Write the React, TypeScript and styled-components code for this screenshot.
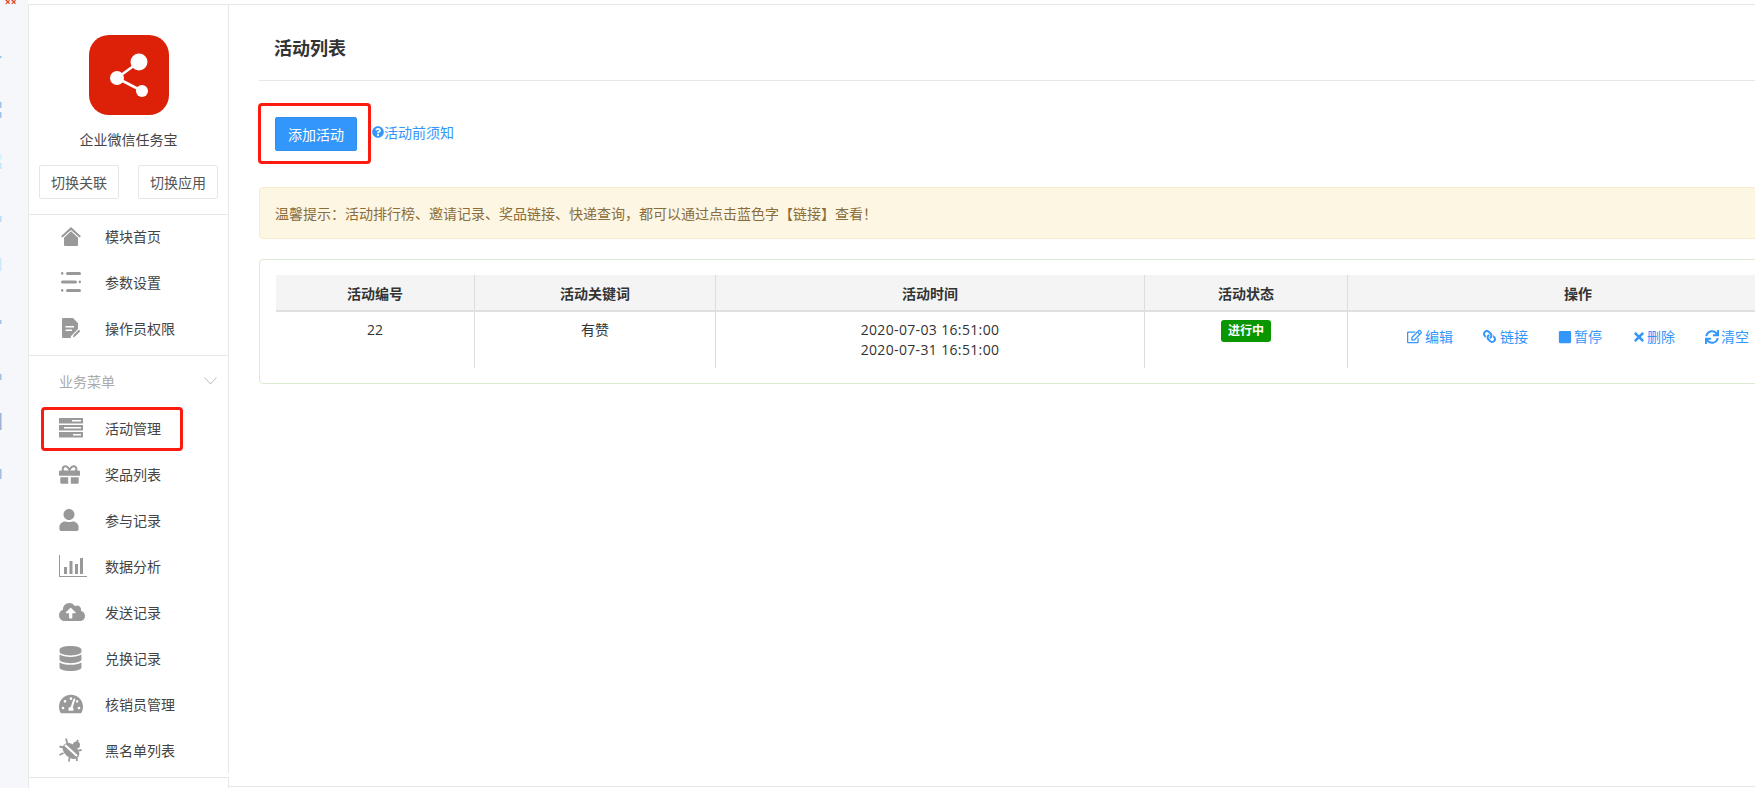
import React from "react";
import styled, { createGlobalStyle } from "styled-components";
import {
  FaGift, FaUser, FaCloudUploadAlt, FaDatabase, FaTachometerAlt,
  FaRegEdit, FaLink, FaStop, FaTimes, FaSync, FaQuestionCircle,
} from "react-icons/fa";

const Global = createGlobalStyle`
  html, body { margin: 0; padding: 0; background: #fff; overflow: hidden; }
  body { font-family: "Open Sans", "Noto Sans CJK SC", sans-serif; font-size: 14px; color: #333; }
  *, *::before, *::after { box-sizing: border-box; }
`;

const Page = styled.div`
  display: flex;
  width: 1755px;
  height: 788px;
  overflow: hidden;
`;
const Strip = styled.svg`
  flex: 0 0 28px;
  width: 28px;
  height: 788px;
  display: block;
  background: #f5f7fa;
`;
const Frame = styled.div`
  flex: 0 0 auto;
  display: flex;
  margin-top: 4px;
  height: 784px;
  border-top: 1px solid #e7e7e7;
`;
const Sidebar = styled.aside`
  flex: 0 0 201px;
  width: 201px;
  border-left: 1px solid #e7e7e7;
  display: flex;
  flex-direction: column;
`;
const SideBody = styled.div`
  border-right: 1px solid #e7e7e7;
`;
const SideFoot = styled.div`
  flex: 1;
  margin-top: 4px;
  border-top: 1px solid #e7e7e7;
  border-right: 1px solid #e7e7e7;
`;
const Brand = styled.div`
  height: 210px;
  padding: 30px 10px 15px;
  border-bottom: 1px solid #e7e7e7;
  display: flex;
  flex-direction: column;
`;
const Logo = styled.div`
  width: 80px;
  height: 80px;
  margin-left: 50px;
  border-radius: 20px;
  background: #dc2108;
  svg { display: block; }
`;
const BrandName = styled.div`
  margin-top: 15px;
  line-height: 20px;
  text-align: center;
  color: #444;
`;
const BrandButtons = styled.div`
  margin-top: 15px;
  display: flex;
  gap: 19px;
`;
const GhostButton = styled.button`
  width: 80px;
  height: 34px;
  padding: 0;
  background: #fff;
  border: 1px solid #e7e7e7;
  border-radius: 2px;
  font: inherit;
  color: #555;
`;
const MenuGroup = styled.div<{ $first?: boolean }>`
  padding-bottom: ${(p) => (p.$first ? "6px" : "2px")};
  border-bottom: ${(p) => (p.$first ? "1px solid #e7e7e7" : "none")};
`;
const GroupHead = styled.div`
  height: 51px;
  padding: 0 11px 1px 30px;
  display: flex;
  align-items: center;
  justify-content: space-between;
  color: #aaa;
`;
const MenuItem = styled.div<{ $marked?: boolean }>`
  position: relative;
  height: 42px;
  margin-bottom: 4px;
  padding-left: 30px;
  display: flex;
  align-items: center;
  color: #444;
  &:last-child { margin-bottom: 0; }
  ${(p) =>
    p.$marked &&
    `&::after {
      content: "";
      position: absolute;
      left: 12px;
      top: 0;
      width: 142px;
      height: 44px;
      border: 3px solid #fb1b10;
      border-radius: 4px;
    }`}
`;
const MenuIcon = styled.span<{ $inset?: number }>`
  flex: 0 0 46px;
  display: flex;
  align-items: center;
  color: #999;
  svg { display: block; margin-left: ${(p) => p.$inset ?? 0}px; }
`;
const Main = styled.main`
  flex: 0 0 1595px;
  width: 1595px;
  height: 782px;
  padding-left: 30px;
  border-bottom: 1px solid #e7e7e7;
`;
const MainHead = styled.div`
  height: 76px;
  padding: 9px 0 0 15px;
  border-bottom: 1px solid #e7e7e7;
  display: flex;
  align-items: center;
`;
const Title = styled.h1`
  margin: 0;
  font-size: 18px;
  font-weight: 700;
  color: #333;
`;
const ActionRow = styled.div`
  margin-top: 22px;
  display: flex;
  align-items: center;
`;
const Marker = styled.div`
  margin-left: -1px;
  padding: 11px 11px 10px 14px;
  border: 3px solid #fb1b10;
  border-radius: 4px;
`;
const PrimaryButton = styled.button`
  display: block;
  width: 82px;
  height: 34px;
  padding: 0;
  border: 1px solid #2f8ff0;
  border-radius: 2px;
  background: #3296fa;
  color: #fff;
  font: inherit;
`;
const HelpLink = styled.a`
  margin: -3px 0 0 1px;
  display: flex;
  align-items: center;
  color: #3296fa;
  svg { display: block; margin-right: 0; }
`;
const Notice = styled.div`
  margin-top: 23px;
  height: 52px;
  padding: 0 0 1px 15px;
  display: flex;
  align-items: center;
  background: #fdf6e3;
  border: 1px solid #f8ecd0;
  border-radius: 4px;
  color: #8a6d3b;
`;
const Card = styled.div`
  margin-top: 20px;
  height: 125px;
  padding: 15px 16px 0;
  border: 1px solid #dcebd0;
  border-radius: 4px;
`;
const Table = styled.table`
  width: 1532px;
  table-layout: fixed;
  border-collapse: separate;
  border-spacing: 0;
`;
const Head = styled.th`
  height: 37px;
  padding: 0;
  background: #f4f4f4;
  border-right: 1px solid #ddd;
  border-bottom: 2px solid #e0e0e0;
  font-size: 14px;
  font-weight: 700;
  color: #333;
  text-align: center;
  &:last-child { border-right: none; }
`;
const Cell = styled.td`
  height: 56px;
  padding: 8px 0 0;
  border-right: 1px solid #ddd;
  line-height: 19.5px;
  text-align: center;
  vertical-align: top;
  color: #333;
  &:last-child { border-right: none; }
`;
const TimeText = styled.span`
  letter-spacing: 0.35px;
`;
const Badge = styled.span`
  display: block;
  width: 50px;
  height: 22px;
  margin: 0 auto;
  border-radius: 3px;
  background: #0a9600;
  color: #fff;
  font-size: 12px;
  font-weight: 700;
  line-height: 22px;
  text-align: center;
`;
const Ops = styled.div`
  display: flex;
  justify-content: center;
  gap: 30px;
  padding-top: 7px;
`;
const Op = styled.a<{ $flip?: boolean; $gap: number }>`
  display: flex;
  align-items: center;
  color: #3296fa;
  white-space: nowrap;
  svg {
    display: block;
    margin-right: ${(p) => p.$gap}px;
    ${(p) => (p.$flip ? "transform: scaleX(-1);" : "")}
  }
`;

const menuA = [
  {
    label: "模块首页",
    inset: 2,
    icon: (
      <svg width="20" height="19" viewBox="0 0 20 19" fill="currentColor">
        <path d="M10 0 20 9.200 18.500 10.600 10 3 1.500 10.600 0 9.200Z" />
        <path d="M3 10.800 10 4.300 17 10.800V18a1 1 0 0 1-1 1H4a1 1 0 0 1-1-1Z" />
      </svg>
    ),
  },
  {
    label: "参数设置",
    inset: 2,
    icon: (
      <svg width="20" height="20" viewBox="0 0 20 20" fill="currentColor">
        <rect x="0" y="0" width="2.400" height="2.800" rx="1.200" />
        <rect x="5" y="0" width="15" height="3" rx="1.500" />
        <rect x="0" y="8.500" width="16" height="3" rx="1.500" />
        <rect x="17.600" y="8.500" width="2.400" height="2.800" rx="1.200" />
        <rect x="0" y="17" width="2.400" height="2.800" rx="1.200" />
        <rect x="5" y="17" width="15" height="3" rx="1.500" />
      </svg>
    ),
  },
  {
    label: "操作员权限",
    inset: 3,
    icon: (
      <svg width="18" height="20" viewBox="0 0 18 20" fill="currentColor">
        <path d="M1 0H11L16 5V11L9 18 8.500 20H1A1 1 0 0 1 0 19V1A1 1 0 0 1 1 0ZM3.500 8V9.500H12V8ZM3.500 11.500V13H10V11.500Z" fillRule="evenodd" />
        <path d="M11 19.500 11.500 17 16.800 11.800 18.200 13.200 13 18.500Z" />
      </svg>
    ),
  },
];

const menuB = [
  {
    label: "活动管理",
    icon: (
      <svg width="24" height="20" viewBox="0 0 24 20" fill="currentColor">
        <path fillRule="evenodd" d="M0 0H24V5.500H0ZM13 2V3.500H22V2Z" />
        <path fillRule="evenodd" d="M0 7H24V12.500H0ZM5 9V10.500H22V9Z" />
        <path fillRule="evenodd" d="M0 14H24V19.500H0ZM14 16V17.500H22V16Z" />
      </svg>
    ),
    marked: true,
  },
  { label: "奖品列表", icon: <FaGift size={21} /> },
  { label: "参与记录", icon: <FaUser size={22} />, inset: -1 },
  {
    label: "数据分析",
    icon: (
      <svg width="28" height="22" viewBox="0 0 28 22" fill="currentColor">
        <path d="M0 0H1V21H28V22H0Z" />
        <rect x="5" y="12" width="3" height="7" />
        <rect x="10.500" y="6" width="3" height="13" />
        <rect x="16" y="9" width="3" height="10" />
        <rect x="21" y="3" width="3" height="16" />
      </svg>
    ),
  },
  { label: "发送记录", icon: <FaCloudUploadAlt size={26} /> },
  { label: "兑换记录", icon: <FaDatabase size={25} />, inset: -1 },
  { label: "核销员管理", icon: <FaTachometerAlt size={24} /> },
  {
    label: "黑名单列表",
    icon: (
      <svg width="23" height="24" viewBox="0 0 23 24" fill="currentColor" stroke="currentColor">
        <ellipse cx="12" cy="13" rx="9.500" ry="6.500" transform="rotate(42 12 13)" strokeWidth="0" />
        <path d="M6 7 18 18" stroke="#fff" strokeWidth="2.200" />
        <circle cx="17.500" cy="7" r="3.500" strokeWidth="0" />
        <path d="M7 .5 8.500 6M.5 8.500 5 9.500M.5 17 4.500 15M10 23.500 10.500 19.500M18 23 17.500 19.500M22.500 12 19.500 12.500M19 2 18 4" strokeWidth="1.800" fill="none" />
      </svg>
    ),
  },
];

const ops = [
  { label: "编辑", gap: 3, icon: <FaRegEdit size={15} /> },
  { label: "链接", gap: 4, icon: <FaLink size={13} />, flip: true },
  { label: "暂停", gap: 2, icon: <FaStop size={14} /> },
  { label: "删除", gap: 1, icon: <FaTimes size={14} /> },
  { label: "清空", gap: 2, icon: <FaSync size={14} /> },
];

const stripMarks: [number, number, string][] = [
  [56, 2, "#9cc3ea"], [102, 6, "#a3c4ea"], [112, 6, "#a3c4ea"],
  [154, 6, "#d4f2fb"], [163, 6, "#c4e6f6"], [216, 6, "#bcdcf4"],
  [258, 13, "#cdeafc"], [320, 4, "#a3c4ea"], [374, 6, "#a9bfe0"],
  [413, 17, "#9fb2d6"], [469, 10, "#a3bce2"],
];

export default function App() {
  return (
    <Page>
      <Global />
      <Strip viewBox="0 0 28 788">
        <path d="M5 0H7L8 1.300 9 0H10L8.800 2 10 4H9L7.800 2.800 6.500 4H5L7 2Z" fill="#e8401f" />
        <path d="M11 0H13L14 1.300 15 0H16L14.800 2 16 4H15L13.800 2.800 12.500 4H11L13 2Z" fill="#e8401f" />
        {stripMarks.map(([y, h, c]) => (
          <rect key={y} x="0" y={y} width="1.500" height={h} fill={c} />
        ))}
      </Strip>
      <Frame>
        <Sidebar>
          <SideBody>
            <Brand>
              <Logo>
                <svg width="80" height="80" viewBox="0 0 80 80" fill="#fff">
                  <path d="M28 43 50 27M28 43 53 56" stroke="#fff" strokeWidth="2.600" />
                  <circle cx="50" cy="27" r="8.500" />
                  <circle cx="28" cy="43" r="7" />
                  <circle cx="53" cy="56" r="6" />
                </svg>
              </Logo>
              <BrandName>企业微信任务宝</BrandName>
              <BrandButtons>
                <GhostButton>切换关联</GhostButton>
                <GhostButton>切换应用</GhostButton>
              </BrandButtons>
            </Brand>
            <MenuGroup $first>
              {menuA.map((m) => (
                <MenuItem key={m.label}>
                  <MenuIcon $inset={m.inset}>{m.icon}</MenuIcon>
                  {m.label}
                </MenuItem>
              ))}
            </MenuGroup>
            <MenuGroup>
              <GroupHead>
                业务菜单
                <svg width="13" height="8" viewBox="0 0 13 8" fill="none" stroke="#bbb" strokeWidth="1">
                  <path d="M.5.5 6.500 7 12.500.5" />
                </svg>
              </GroupHead>
              {menuB.map((m) => (
                <MenuItem key={m.label} $marked={m.marked}>
                  <MenuIcon $inset={m.inset}>{m.icon}</MenuIcon>
                  {m.label}
                </MenuItem>
              ))}
            </MenuGroup>
          </SideBody>
          <SideFoot />
        </Sidebar>
        <Main>
          <MainHead>
            <Title>活动列表</Title>
          </MainHead>
          <ActionRow>
            <Marker>
              <PrimaryButton>添加活动</PrimaryButton>
            </Marker>
            <HelpLink>
              <FaQuestionCircle size={12} />
              活动前须知
            </HelpLink>
          </ActionRow>
          <Notice>温馨提示：活动排行榜、邀请记录、奖品链接、快递查询，都可以通过点击蓝色字【链接】查看！</Notice>
          <Card>
            <Table>
              <colgroup>
                <col width="199" />
                <col width="241" />
                <col width="429" />
                <col width="203" />
                <col width="460" />
              </colgroup>
              <thead>
                <tr>
                  <Head>活动编号</Head>
                  <Head>活动关键词</Head>
                  <Head>活动时间</Head>
                  <Head>活动状态</Head>
                  <Head>操作</Head>
                </tr>
              </thead>
              <tbody>
                <tr>
                  <Cell>22</Cell>
                  <Cell>有赞</Cell>
                  <Cell>
                    <TimeText>
                      2020-07-03 16:51:00
                      <br />
                      2020-07-31 16:51:00
                    </TimeText>
                  </Cell>
                  <Cell>
                    <Badge>进行中</Badge>
                  </Cell>
                  <Cell>
                    <Ops>
                      {ops.map((o) => (
                        <Op key={o.label} $flip={o.flip} $gap={o.gap}>
                          {o.icon}
                          {o.label}
                        </Op>
                      ))}
                    </Ops>
                  </Cell>
                </tr>
              </tbody>
            </Table>
          </Card>
        </Main>
      </Frame>
    </Page>
  );
}
